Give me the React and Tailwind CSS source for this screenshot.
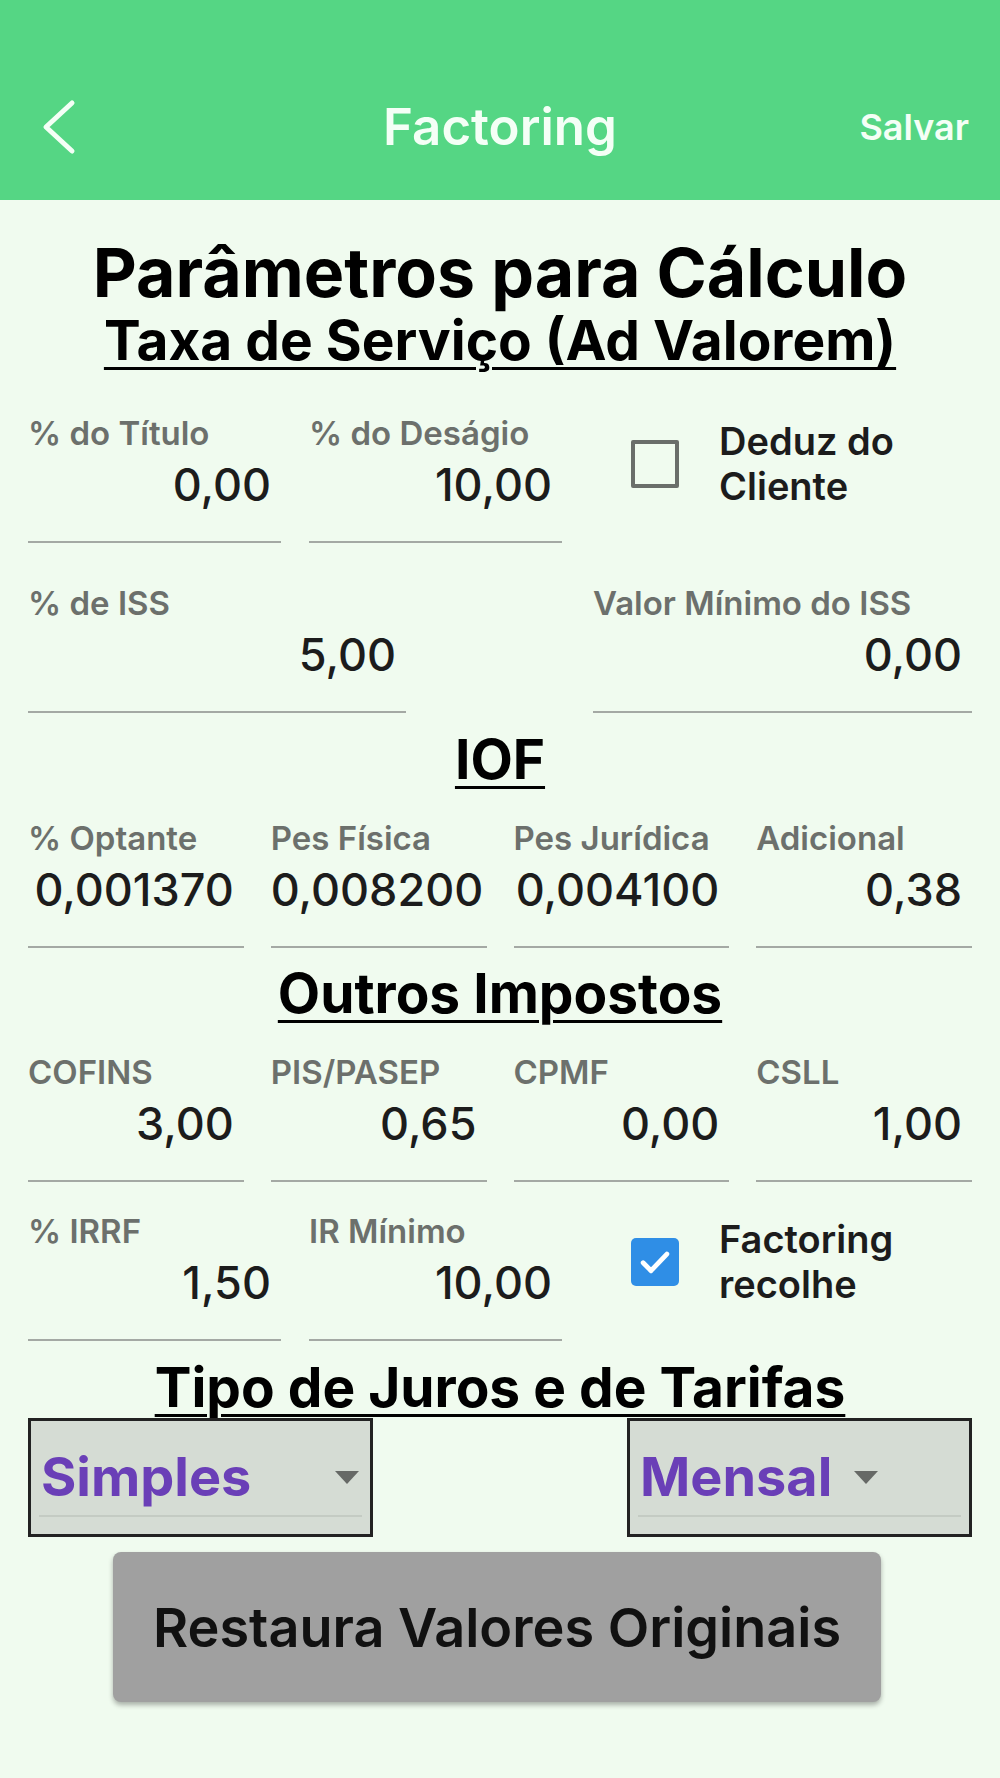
import { useState } from "react";

const font = { fontFamily: "Inter, 'Liberation Sans', sans-serif" };

function Field({ label, value, className = "" }) {
  return (
    <div className={`border-b-2 border-[#a4a9a4] pb-[30px] ${className}`}>
      <div className="h-[32px] whitespace-nowrap text-[33px] font-semibold leading-[32px] text-[#6c706c]">
        {label}
      </div>
      <div className="mt-[10px] h-[52px] whitespace-nowrap pr-[10px] text-right text-[45px] font-medium leading-[52px] text-[#1c1c1c]">
        {value}
      </div>
    </div>
  );
}

function Heading({ children, className = "" }) {
  return (
    <div className={`text-center ${className}`}>
      <span className="text-[55px] font-bold leading-[60px] text-black underline decoration-[3px] underline-offset-[7px]">
        {children}
      </span>
    </div>
  );
}

function Check({ checked, onChange, lines }) {
  return (
    <button
      type="button"
      onClick={onChange}
      className="flex items-center gap-[40px] text-left"
    >
      {checked ? (
        <span className="flex h-[48px] w-[48px] items-center justify-center rounded-[5px] bg-[#2f8ee6]">
          <svg width="38" height="38" viewBox="0 0 24 24" fill="none">
            <path
              d="M4.5 12.5l5 5L19.5 7"
              stroke="white"
              strokeWidth="3"
              strokeLinecap="round"
              strokeLinejoin="round"
            />
          </svg>
        </span>
      ) : (
        <span className="h-[48px] w-[48px] rounded-[2px] border-[4px] border-[#6a6e6a]" />
      )}
      <span className="text-[38px] font-semibold leading-[45px] text-[#1c1c1c]">
        {lines[0]}
        <br />
        {lines[1]}
      </span>
    </button>
  );
}

function Arrow() {
  return (
    <svg width="24" height="13" viewBox="0 0 24 13">
      <path d="M0 0h24L12 13z" fill="#666966" />
    </svg>
  );
}

export default function App() {
  const [deduz, setDeduz] = useState(false);
  const [recolhe, setRecolhe] = useState(true);

  return (
    <div className="min-h-[1778px] w-[1000px] bg-[#f0fbef]" style={font}>

      {/* Header */}

      <div className="grid h-[200px] grid-cols-[1fr_auto_1fr] items-center bg-[#55d684] pt-[54px]">
        <div className="pl-[42px]">
          <svg width="34" height="56" viewBox="0 0 34 56" fill="none">
            <path
              d="M30 4L4 28l26 24"
              stroke="#f4fff6"
              strokeWidth="5"
              strokeLinecap="round"
              strokeLinejoin="round"
            />
          </svg>
        </div>
        <div className="text-[51px] font-semibold text-[#f4fff6]">Factoring</div>
        <div className="pr-[31px] text-right text-[36px] font-semibold text-[#f4fff6]">
          Salvar
        </div>
      </div>

      <div className="px-[28px]">

        {/* Titles */}

        <div className="mt-[37px] text-center text-[68px] font-bold leading-[70px] text-black">
          Parâmetros para Cálculo
        </div>
        <Heading className="mt-[3px]">Taxa de Serviço (Ad Valorem)</Heading>

        {/* Ad valorem */}

        <div className="mt-[47px] flex items-start">
          <Field label="% do Título" value="0,00" className="w-[253px]" />
          <Field label="% do Deságio" value="10,00" className="ml-[28px] w-[253px]" />
          <div className="ml-[69px] pt-[2px]">
            <Check
              checked={deduz}
              onChange={() => setDeduz(!deduz)}
              lines={["Deduz do", "Cliente"]}
            />
          </div>
        </div>

        <div className="mt-[44px] flex justify-between">
          <Field label="% de ISS" value="5,00" className="w-[378px]" />
          <Field label="Valor Mínimo do ISS" value="0,00" className="w-[379px]" />
        </div>

        {/* IOF */}

        <Heading className="mt-[16px]">IOF</Heading>

        <div className="mt-[33px] grid grid-cols-4 gap-x-[27px]">
          <Field label="% Optante" value="0,001370" />
          <Field label="Pes Física" value="0,008200" />
          <Field label="Pes Jurídica" value="0,004100" />
          <Field label="Adicional" value="0,38" />
        </div>

        {/* Outros */}

        <Heading className="mt-[15px]">Outros Impostos</Heading>

        <div className="mt-[33px] grid grid-cols-4 gap-x-[27px]">
          <Field label="COFINS" value="3,00" />
          <Field label="PIS/PASEP" value="0,65" />
          <Field label="CPMF" value="0,00" />
          <Field label="CSLL" value="1,00" />
        </div>

        <div className="mt-[33px] flex items-start">
          <Field label="% IRRF" value="1,50" className="w-[253px]" />
          <Field label="IR Mínimo" value="10,00" className="ml-[28px] w-[253px]" />
          <div className="ml-[69px] pt-[2px]">
            <Check
              checked={recolhe}
              onChange={() => setRecolhe(!recolhe)}
              lines={["Factoring", "recolhe"]}
            />
          </div>
        </div>

        {/* Tipo de juros */}

        <Heading className="mt-[16px]">Tipo de Juros e de Tarifas</Heading>

        <div className="mt-[1px] flex justify-between">
          <div className="h-[119px] w-[345px] border-[3px] border-[#222] bg-[#d5dcd4] px-[8px]">
            <div className="flex h-[96px] items-center border-b-2 border-[#c4cbc3] pl-[2px] pr-[3px] pt-[18px]">
              <span className="flex-1 text-[54px] font-bold leading-[60px] text-[#6a3fb7]">Simples</span>
              <Arrow />
            </div>
          </div>
          <div className="h-[119px] w-[345px] border-[3px] border-[#222] bg-[#d5dcd4] px-[8px]">
            <div className="flex h-[96px] items-center gap-[22px] border-b-2 border-[#c4cbc3] pl-[2px] pt-[18px]">
              <span className="text-[54px] font-bold leading-[60px] text-[#6a3fb7]">Mensal</span>
              <Arrow />
            </div>
          </div>
        </div>

        <div className="mt-[15px] flex justify-center">
          <button className="-ml-[6px] h-[150px] w-[768px] rounded-[8px] bg-[#a0a0a0] text-[54px] font-semibold text-[#111] shadow-[0_3px_5px_rgba(0,0,0,0.3)]">
            Restaura Valores Originais
          </button>
        </div>

      </div>
    </div>
  );
}
